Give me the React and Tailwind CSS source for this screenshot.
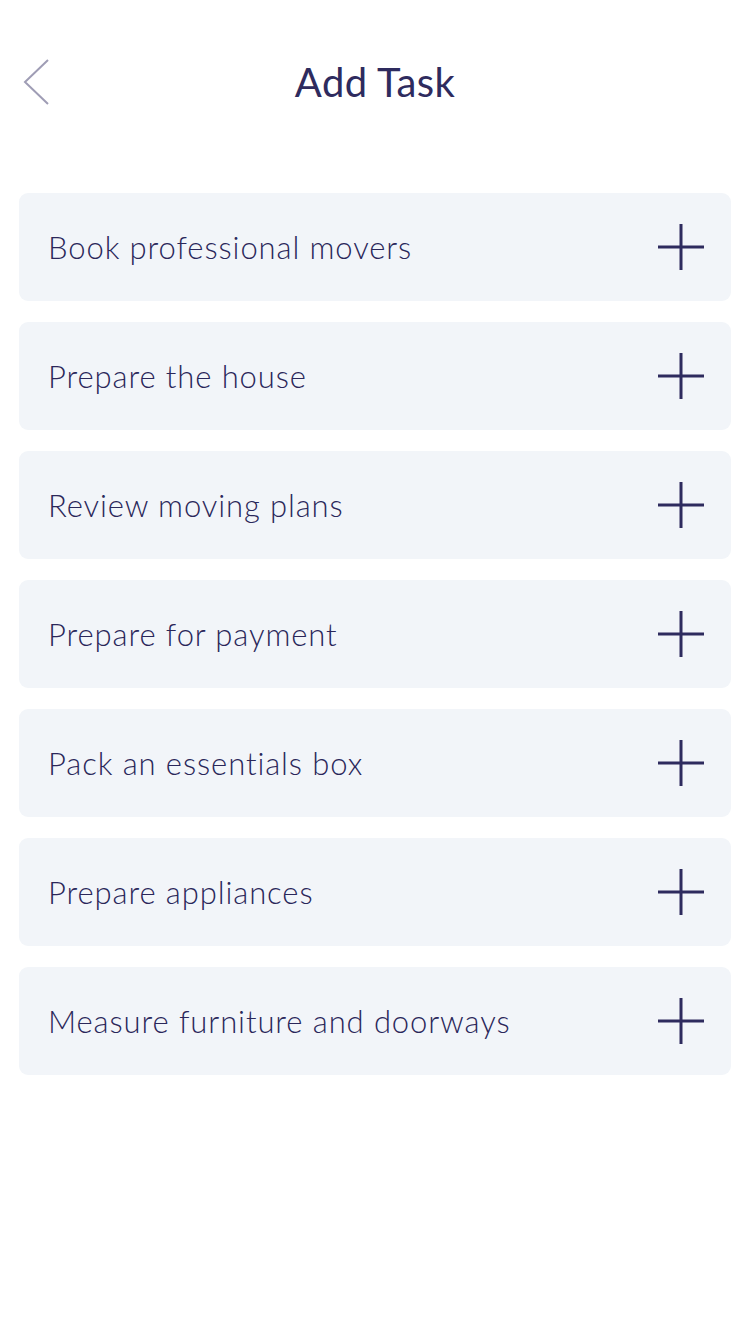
import React from "react";

const tasks = [
  "Book professional movers",
  "Prepare the house",
  "Review moving plans",
  "Prepare for payment",
  "Pack an essentials box",
  "Prepare appliances",
  "Measure furniture and doorways",
];

export default function App() {
  return (
    <div
      className="w-[750px] min-h-[1334px] bg-white text-[#2e2b5e]"
      style={{ fontFamily: "Lato, 'Open Sans', sans-serif" }}
    >
      <header className="relative h-[165px] flex items-start justify-center pt-[59px]">
        <button className="absolute left-[22px] top-[58px] w-[30px] h-[48px]">
          <svg width="30" height="48" viewBox="0 0 30 48" fill="none">
            <path d="M26 2 L3 24 L26 46" stroke="#9f9db5" strokeWidth="2" />
          </svg>
        </button>
        <h1 className="text-[40px] leading-[46px] font-normal tracking-[0.4px]">Add Task</h1>
      </header>
      <div className="flex flex-col gap-[21px] px-[19px] pt-[28px]">
        {tasks.map((t) => (
          <div
            key={t}
            className="h-[108px] rounded-[9px] bg-[#f2f5f9] flex items-center justify-between pl-[29px] pr-[27px]"
          >
            <span className="text-[31px] leading-none font-light tracking-[0.9px] text-[#2a275a]">{t}</span>
            <svg width="46" height="46" viewBox="0 0 46 46">
              <path d="M23 0 V46 M0 23 H46" stroke="#2e2b5e" strokeWidth="3" />
            </svg>
          </div>
        ))}
      </div>
    </div>
  );
}
